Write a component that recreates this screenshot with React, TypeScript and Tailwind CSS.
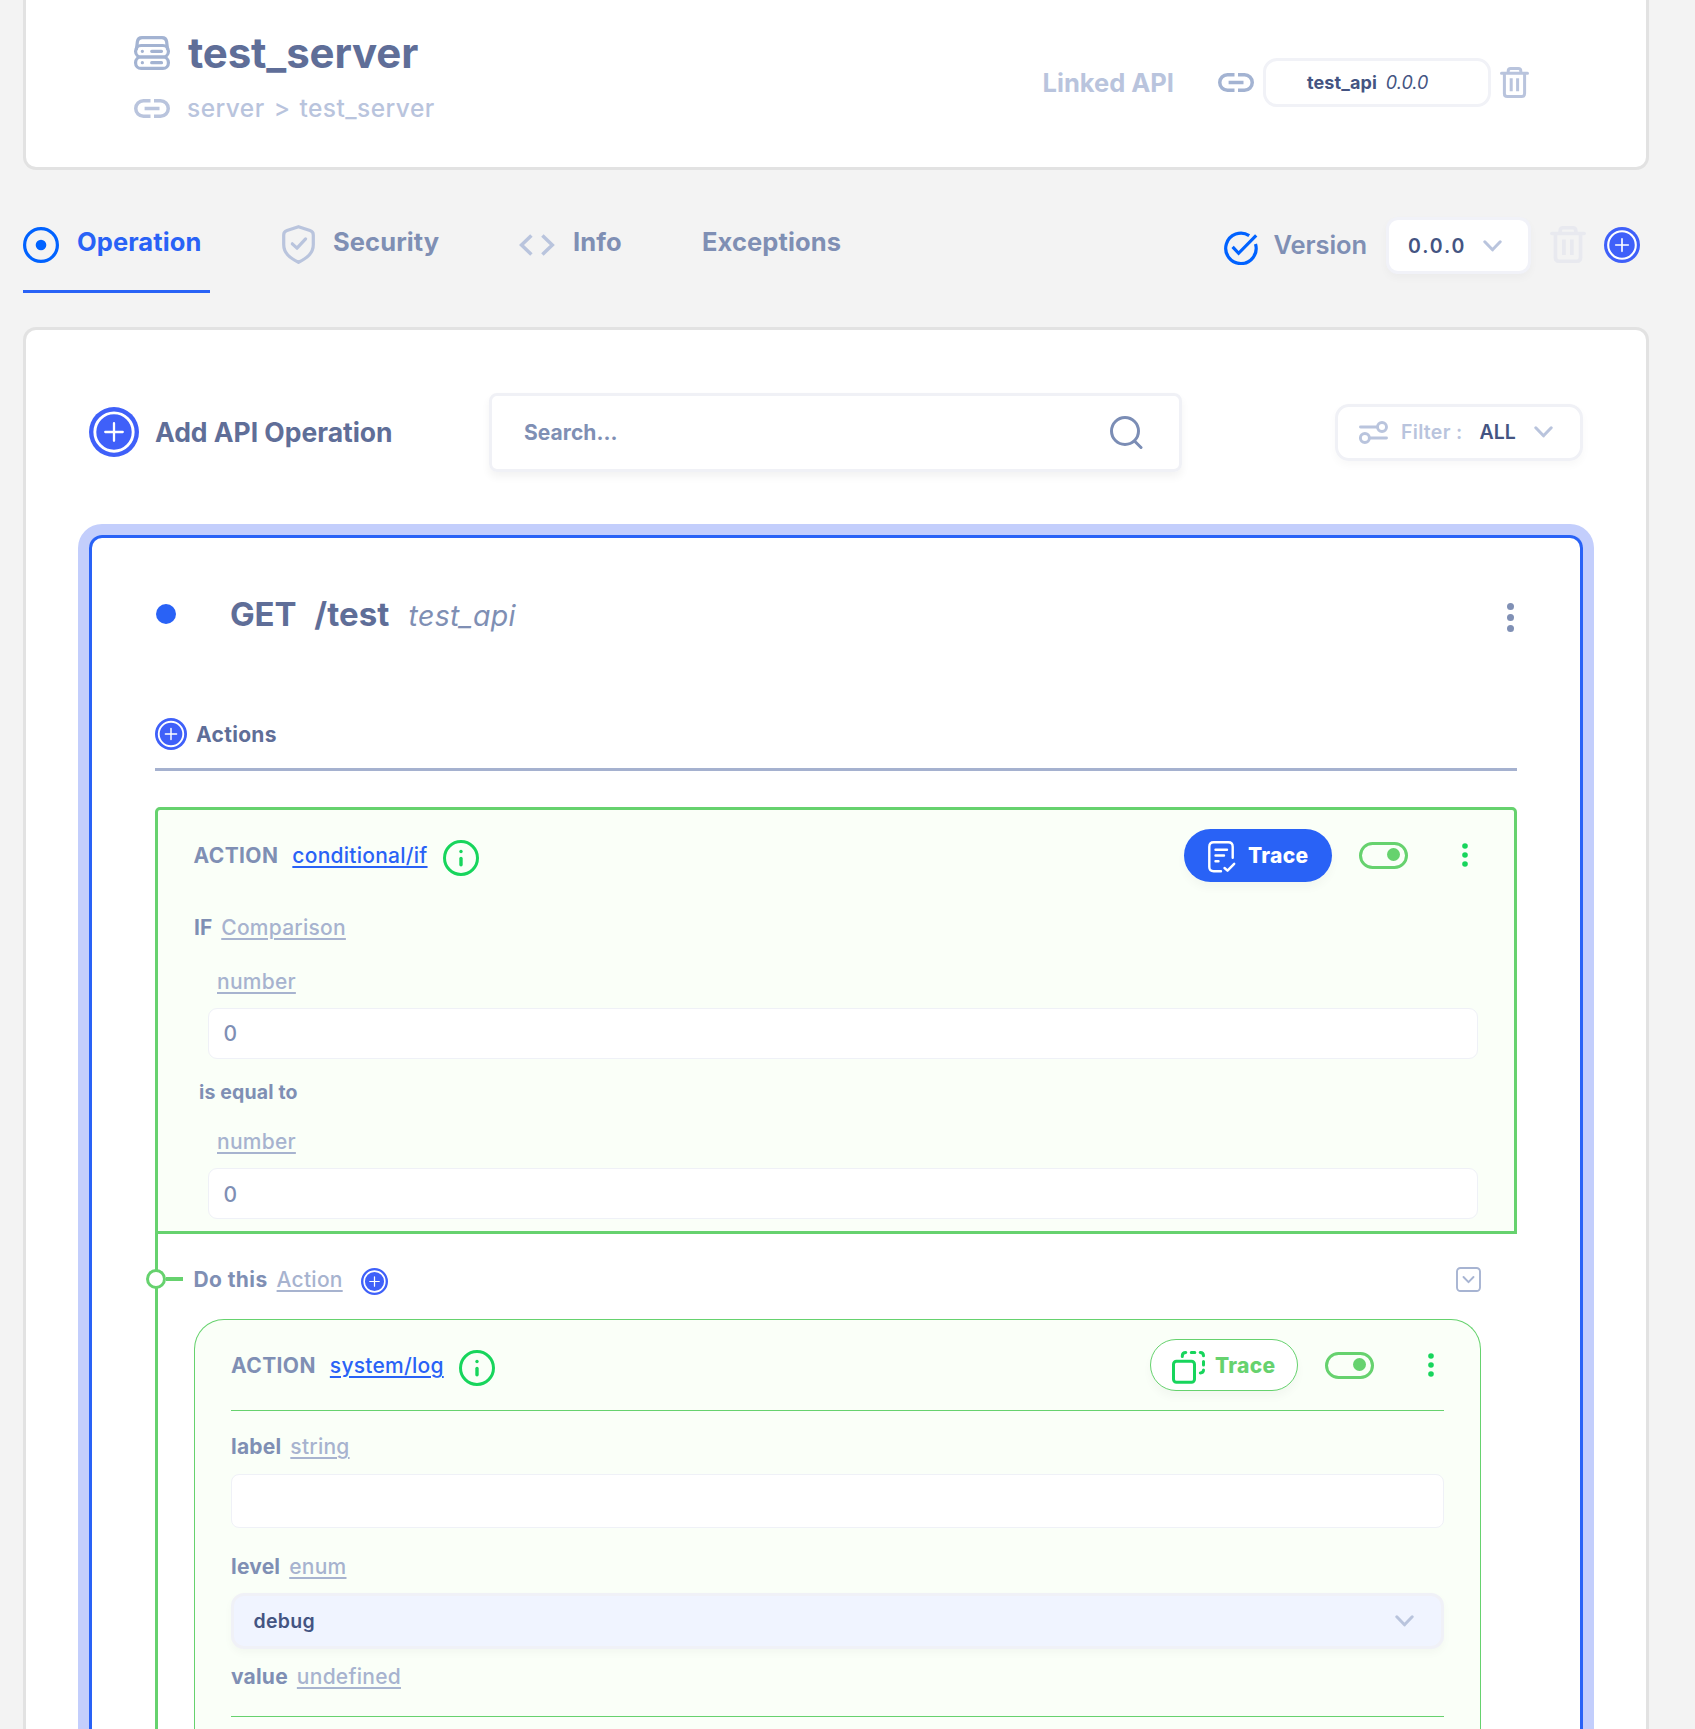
import React from "react";
import type { ReactNode } from "react";

function ServerIcon() {
  return (
    <svg width="36" height="34" viewBox="0 0 36 34" fill="none" stroke="#a3b3d2" strokeWidth="3.200" strokeLinecap="round">
      <path d="M2.500 13 L3.400 5.500 Q4 1.600 8 1.600 H28 Q32 1.600 32.600 5.500 L33.500 13" />
      <rect x="1.600" y="9.500" width="32.800" height="11.500" rx="5.500" />
      <rect x="1.600" y="21" width="32.800" height="11.400" rx="5.500" />
      <path d="M8.300 15.300h.1M8.300 26.700h.1M17.700 15.300h9.800M17.700 26.700h9.800" />
    </svg>
  );
}

function LinkIcon({ color }: { color: string }) {
  return (
    <svg width="36" height="19" viewBox="0 0 36 19" fill="none" stroke={color} strokeWidth="3.500">
      <path d="M16.500 1.800H9.450a7.650 7.650 0 0 0 0 15.400h7.050M20 1.800h6.550a7.650 7.650 0 0 1 0 15.400h-6.550M10.600 9.500h14.900" />
    </svg>
  );
}

function TrashIcon({ width, height, color }: { width: number; height: number; color: string }) {
  return (
    <svg width={width} height={height} viewBox="0 0 29 31" preserveAspectRatio="none" fill="none" stroke={color} strokeWidth="3" strokeLinecap="round" strokeLinejoin="round">
      <path d="M1.500 6.300h26M8.200 6V4q0-2.500 2.500-2.500h7.600Q20.800 1.500 20.800 4v2M4.400 6.600V26.400q0 3.100 2.900 3.100h14.400q2.900 0 2.900-3.100V6.600" />
      <path d="M11.200 11.300v13M17.600 11.300v13" strokeLinecap="butt" />
    </svg>
  );
}

function TargetIcon() {
  return (
    <svg width="36" height="36" viewBox="0 0 36 36" fill="none">
      <circle cx="18" cy="18" r="16.400" stroke="#0062ff" strokeWidth="3.200" />
      <circle cx="18" cy="18" r="5.300" fill="#0062ff" />
    </svg>
  );
}

function ShieldIcon() {
  return (
    <svg width="33" height="39" viewBox="0 0 33 39" fill="none" stroke="#b9c4dd" strokeWidth="3.200" strokeLinejoin="round">
      <path d="M16.500 1.700 28 5.600q3.300 1.100 3.300 4.300v9.600c0 8.600-6 13.400-14.800 17.800C7.700 32.900 1.700 28.100 1.700 19.500V9.900q0-3.200 3.300-4.300z" />
      <path d="m10.300 18.800 4.700 4.400 8.600-9.300" strokeLinecap="round" />
    </svg>
  );
}

function CodeIcon() {
  return (
    <svg width="36" height="22" viewBox="0 0 36 22" fill="none" stroke="#b9c4dd" strokeWidth="3.500">
      <path d="M12.400 1.500 2.500 11l9.900 9.500M23.400 1.500 33.300 11l-9.900 9.500" />
    </svg>
  );
}

function CheckCircleIcon() {
  return (
    <svg width="34" height="34" viewBox="0 0 34 34" fill="none" stroke="#0062ff" strokeWidth="3.200">
      <path d="M25.200 4.600A15.200 15.200 0 1 0 31.500 13" />
      <path d="m8.600 15.800 6 6.500L32.200 4.300" />
    </svg>
  );
}

function PlusCircle({ size }: { size: number }) {
  return (
    <svg width={size} height={size} viewBox="0 0 24 24" fill="none" className="shrink-0">
      <circle cx="12" cy="12" r="12" fill="#3f60f9" />
      <circle cx="12" cy="12" r="9.200" stroke="#fff" strokeWidth="1.400" />
      <path d="M12 7.800v8.400M7.800 12h8.400" stroke="#fff" strokeWidth="1.100" strokeLinecap="round" />
    </svg>
  );
}

function SearchIcon() {
  return (
    <svg width="33" height="34" viewBox="0 0 33 34" fill="none" stroke="#7b8db5" strokeWidth="3" strokeLinecap="round">
      <circle cx="15" cy="15" r="13.500" />
      <path d="m24.500 25 6.500 6.500" />
    </svg>
  );
}

function FilterIcon() {
  return (
    <svg width="29" height="23" viewBox="0 0 29 23" fill="none" stroke="#b9c4dd" strokeWidth="2.900" strokeLinecap="round">
      <circle cx="23" cy="6" r="4.500" />
      <circle cx="5.900" cy="17" r="4.500" />
      <path d="M1.500 6h17M10.500 17h17" />
    </svg>
  );
}

function Chevron() {
  return (
    <svg width="19" height="12" viewBox="0 0 19 12" fill="none" stroke="#b9c4dd" strokeWidth="3" strokeLinecap="round" strokeLinejoin="round">
      <path d="m1.800 1.800 7.700 8 7.700-8" />
    </svg>
  );
}

function InfoIcon() {
  return (
    <svg width="36" height="36" viewBox="0 0 36 36" fill="none" stroke="#17d55c" strokeLinecap="round" className="shrink-0">
      <circle cx="18" cy="18" r="16.500" strokeWidth="3" />
      <path d="M18 18.500v6.200" strokeWidth="3.400" />
      <path d="M18 11.400v.1" strokeWidth="3.400" />
    </svg>
  );
}

function NoteCheckIcon() {
  return (
    <svg width="28" height="32" viewBox="0 0 28 32" fill="none" stroke="#fff" strokeWidth="2.400" strokeLinecap="round" strokeLinejoin="round">
      <path d="M13 30.300H5.700q-4.400 0-4.400-4.400V5.700q0-4.400 4.400-4.400h14.600q4.400 0 4.400 4.400v11" />
      <path d="M7.500 8.700h11.500M7.500 14.500h8.500M7.500 20.200h3M16.500 27l3 2.700 6.700-6.900" />
    </svg>
  );
}

function CopyDashIcon() {
  return (
    <svg width="33" height="33" viewBox="0 0 33 33" fill="none" stroke="#17d55c" strokeWidth="3" strokeLinecap="round">
      <rect x="1.500" y="10.200" width="21" height="21" rx="3" />
      <path d="M10.300 5.500V5q0-3.400 3.500-3.500M19.300 1.500h3.500M28.200 1.500q3.300.1 3.300 3.200M31.500 10.500v3.500M31.500 19q0 2.800-3.200 3" />
    </svg>
  );
}

function CollapseIcon() {
  return (
    <svg width="25" height="25" viewBox="0 0 25 25" fill="none" stroke="#a7b4d2" strokeWidth="1.900" strokeLinecap="round" strokeLinejoin="round">
      <rect x="1" y="1" width="23" height="23" rx="3.500" />
      <path d="m7.500 10 5 5.200 5-5.200" />
    </svg>
  );
}

function KebabIcon() {
  return (
    <svg width="6" height="24" viewBox="0 0 6 24" fill="#17d55c">
      <circle cx="3" cy="3" r="2.800" />
      <circle cx="3" cy="12" r="2.800" />
      <circle cx="3" cy="21" r="2.800" />
    </svg>
  );
}

function Toggle() {
  return (
    <div className="flex h-[27px] w-[49px] items-center justify-end rounded-full border-3 border-[#66d26e] bg-[#fafff8] pr-[5px] pb-[2px]">
      <div className="size-[13px] rounded-full bg-[#66d26e]" />
    </div>
  );
}

function TypeLink({ children }: { children: ReactNode }) {
  return (
    <span className="font-medium tracking-[0.25px] text-[#a7b3cf] underline decoration-2 underline-offset-[3px]">{children}</span>
  );
}

function ActionHeading({ path, button }: { path: string; button: ReactNode }) {
  return (
    <>
      <span className="mt-[2px] font-bold tracking-[0.4px]">ACTION</span>
      <span className="mt-[2px] ml-[14px] font-medium tracking-[0.25px] text-[#2962f6] underline decoration-2 underline-offset-[3px]">{path}</span>
      <div className="mt-[5px] ml-[15px]">
        <InfoIcon />
      </div>
      <div className="ml-auto flex items-center">
        {button}
        <div className="ml-[27px]">
          <Toggle />
        </div>
        <div className="ml-[54px]">
          <KebabIcon />
        </div>
      </div>
    </>
  );
}

export default function App() {
  return (
    <div className="h-[1729px] w-[1695px] overflow-hidden bg-[#f3f3f3] px-[23px] font-['Inter',sans-serif] text-[21px] leading-[28px] text-[#7f8fb4]">
      <div className="w-[1626px]">
        <header className="flex h-[170px] justify-between rounded-b-[13px] border-x-3 border-b-3 border-[#e2e2e2] bg-white pr-[117px] pl-[108px]">
          <div className="pt-[28px]">
            <div className="flex h-[50px] items-center gap-[18px]">
              <ServerIcon />
              <h1 className="text-[42px] font-bold tracking-[-0.15px] text-[#5f6e98]">test_server</h1>
            </div>
            <div className="flex h-[60px] items-center gap-[17px]">
              <LinkIcon color="#b9c4dd" />
              <span className="flex gap-[9px] text-[24.5px] font-medium tracking-[0.45px] text-[#b9c4dd]">
                <span>server</span>
                <span>&gt;</span>
                <span>test_server</span>
              </span>
            </div>
          </div>
          <div className="mt-[58px] flex h-[49px] items-center">
            <span className="mr-[44px] text-[25.5px] font-bold text-[#b9c4dd]">Linked API</span>
            <LinkIcon color="#a3b3d2" />
            <div className="mr-[9px] ml-[9px] flex h-[49px] w-[228px] items-center gap-[9px] rounded-[14px] border-3 border-[#f1f2f7] pl-[41px] text-[18px] text-[#445482]">
              <span className="font-bold tracking-[0.1px]">test_api</span>
              <span className="italic">0.0.0</span>
            </div>
            <TrashIcon width={29} height={31} color="#b9c4dd" />
          </div>
        </header>

        <div className="flex h-[157px] justify-between pr-[9px]">
          <nav className="mt-[24px] flex h-[99px] text-[25.5px] font-bold tracking-[0.1px]">
            <div className="flex w-[187px] items-center gap-[18px] border-b-3 border-[#2962f6] text-[#2962f6]">
              <div className="mt-[6px]">
                <TargetIcon />
              </div>
              Operation
            </div>
            <div className="ml-[72px] flex w-[237px] items-center gap-[18px] border-b-3 border-transparent">
              <div className="mt-[5px]">
                <ShieldIcon />
              </div>
              Security
            </div>
            <div className="flex w-[183px] items-center gap-[18px] border-b-3 border-transparent">
              <div className="mt-[5px]">
                <CodeIcon />
              </div>
              Info
            </div>
            <div className="flex items-center border-b-3 border-transparent">Exceptions</div>
          </nav>
          <div className="mt-[47px] flex h-[57px] items-center">
            <div className="mt-[4px] mr-[16px]">
              <CheckCircleIcon />
            </div>
            <span className="mr-[19px] mb-px text-[25.5px] font-semibold tracking-[-0.1px]">Version</span>
            <div className="flex h-[57px] w-[145px] items-center justify-between rounded-[12px] border-3 border-[#f1f2f8] bg-white pr-[26px] pl-[19px] shadow-[0_4px_8px_rgba(0,0,0,0.03)]">
              <span className="text-[19.5px] font-semibold tracking-[1.9px] text-[#445482]">0.0.0</span>
              <Chevron />
            </div>
            <div className="mr-[18px] mb-[2px] ml-[19px]">
              <TrashIcon width={36} height={37} color="#e8e9ef" />
            </div>
            <div className="mb-[2px]">
              <PlusCircle size={36} />
            </div>
          </div>
        </div>

        <main className="h-[1402px] rounded-t-[13px] border-3 border-b-0 border-[#e2e2e2] bg-white px-[63px] pt-[63px]">
          <div className="flex h-[79px] items-center">
            <div className="flex w-[400px] items-center gap-[16px] pb-px">
              <PlusCircle size={50} />
              <span className="pb-px text-[26.5px] font-bold tracking-[-0.02px] text-[#5f6e98]">Add API Operation</span>
            </div>
            <div className="flex h-[79px] w-[693px] items-center justify-between rounded-[8px] border-3 border-[#f0f1f6] pr-[36px] pl-[32px] shadow-[0_5px_8px_rgba(0,0,0,0.05)]">
              <span className="font-bold tracking-[0.05px]">Search...</span>
              <SearchIcon />
            </div>
            <div className="ml-auto flex h-[57px] w-[248px] items-center rounded-[14px] border-3 border-[#f0f1f6] pr-[27px] pb-px pl-[21px] text-[19.5px] shadow-[0_4px_8px_rgba(0,0,0,0.03)]">
              <FilterIcon />
              <span className="ml-[13px] font-semibold tracking-[0.3px] text-[#b9c4dd]">Filter :</span>
              <span className="ml-[17px] font-semibold text-[#445482]">ALL</span>
              <div className="ml-auto">
                <Chevron />
              </div>
            </div>
          </div>

          <section className="mt-[63px] h-[1194px] rounded-t-[13px] border-3 border-b-0 border-[#2962f6] px-[63px] shadow-[0_0_0_11px_#c3cefc]">
            <div className="flex h-[152px] items-center">
              <div className="ml-px size-[20px] rounded-full bg-[#2962f6]" />
              <div className="mt-px ml-[54px] flex items-baseline text-[33px] font-bold text-[#5f6e98]">
                <span className="tracking-[-0.2px]">GET</span>
                <span className="ml-[18px] tracking-[0.1px]">/test</span>
                <span className="ml-[19px] text-[28.5px] font-normal tracking-[0.3px] text-[#7f8fb4] italic">test_api</span>
              </div>
              <div className="mt-[6px] mr-[3px] ml-auto flex flex-col gap-[4px]">
                <div className="size-[7px] rounded-full bg-[#8090b5]" />
                <div className="size-[7px] rounded-full bg-[#8090b5]" />
                <div className="size-[7px] rounded-full bg-[#8090b5]" />
              </div>
            </div>

            <div className="mt-[10px] flex h-[71px] items-center gap-[9px] border-b-3 border-[#a5b1cf]">
              <PlusCircle size={32} />
              <span className="mt-[2px] font-bold tracking-[0.3px] text-[#5f6e98]">Actions</span>
            </div>

            <div className="mt-[36px] h-[427px] rounded-t-[5px] border-3 border-[#66d26e] bg-[#fafff8]">
              <div className="flex h-[90px] items-center pr-[46px] pl-[35.5px]">
                <ActionHeading
                  path="conditional/if"
                  button={
                    <div className="flex h-[53px] w-[148px] items-center rounded-full bg-[#2962f6] pl-[24px] font-extrabold tracking-[0.3px] text-white shadow-[0_6px_10px_rgba(0,0,0,0.03)]">
                      <div className="mt-[3px] mr-[12px]">
                        <NoteCheckIcon />
                      </div>
                      <span className="mt-px">Trace</span>
                    </div>
                  }
                />
              </div>
              <div className="flex h-[55px] items-center gap-[9px] pl-[36px]">
                <span className="font-bold">IF</span>
                <TypeLink>Comparison</TypeLink>
              </div>
              <div className="flex h-[53px] items-center pl-[59px]">
                <TypeLink>number</TypeLink>
              </div>
              <div className="mr-[36px] ml-[50px] flex h-[51px] items-center rounded-[9px] border border-[#eff1f7] bg-white pl-[14.5px] font-medium">0</div>
              <div className="flex h-[66px] items-center pl-[41px] text-[19.5px] font-bold tracking-[0.15px]">is equal to</div>
              <div className="mb-[10px] flex h-[33px] items-center pl-[59px]">
                <TypeLink>number</TypeLink>
              </div>
              <div className="mr-[36px] ml-[50px] flex h-[51px] items-center rounded-[9px] border border-[#eff1f7] bg-white pt-[2px] pl-[14.5px] font-medium">0</div>
            </div>

            <div className="relative border-l-3 border-[#66d26e]">
              <div className="absolute top-[35px] left-[-12px] flex items-center">
                <div className="size-[20px] rounded-full border-3 border-[#66d26e] bg-white" />
                <div className="h-[4px] w-[17px] bg-[#66d26e]" />
              </div>
              <div className="flex h-[85px] items-center pt-[6px] pr-[36px] pl-[35.5px]">
                <span className="font-bold tracking-[0.4px]">Do this</span>
                <div className="ml-[9px]">
                  <TypeLink>Action</TypeLink>
                </div>
                <div className="mt-[4px] ml-[18px]">
                  <PlusCircle size={27} />
                </div>
                <div className="ml-auto">
                  <CollapseIcon />
                </div>
              </div>

              <div className="mx-[36px] h-[410px] rounded-t-[30px] border border-b-0 border-[#66d26e] bg-[#fafff8] px-[36px]">
                <div className="flex h-[91px] items-center border-b border-[#66d26e] pr-[10px]">
                  <ActionHeading
                    path="system/log"
                    button={
                      <div className="flex h-[52px] w-[148px] items-center rounded-full border border-[#66d26e] bg-white pl-[21px] font-extrabold tracking-[0.3px] text-[#66d26e] shadow-[0_6px_10px_rgba(0,0,0,0.03)]">
                        <div className="mt-[4px] mr-[10px]">
                          <CopyDashIcon />
                        </div>
                        <span className="mt-px">Trace</span>
                      </div>
                    }
                  />
                </div>
                <div className="flex h-[63px] items-center gap-[9px] pt-[9px]">
                  <span className="font-bold tracking-[0.2px]">label</span>
                  <TypeLink>string</TypeLink>
                </div>
                <div className="h-[54px] rounded-[8px] border border-[#eff1f7] bg-white" />
                <div className="flex h-[65px] items-center gap-[9px] pt-[12px]">
                  <span className="font-bold tracking-[0.2px]">level</span>
                  <TypeLink>enum</TypeLink>
                </div>
                <div className="flex h-[56px] items-center justify-between rounded-[13px] border-3 border-[#f0f1f7] bg-[#f0f4ff] pr-[27px] pl-[19.5px] shadow-[0_4px_8px_rgba(0,0,0,0.03)]">
                  <span className="text-[19.5px] font-semibold tracking-[0.3px] text-[#445482]">debug</span>
                  <Chevron />
                </div>
                <div className="flex h-[67px] items-center gap-[9px] pb-[12px]">
                  <span className="font-bold tracking-[0.2px]">value</span>
                  <TypeLink>undefined</TypeLink>
                </div>
                <div className="h-[14px] border-t border-[#66d26e]" />
              </div>
            </div>
          </section>
        </main>
      </div>
    </div>
  );
}
